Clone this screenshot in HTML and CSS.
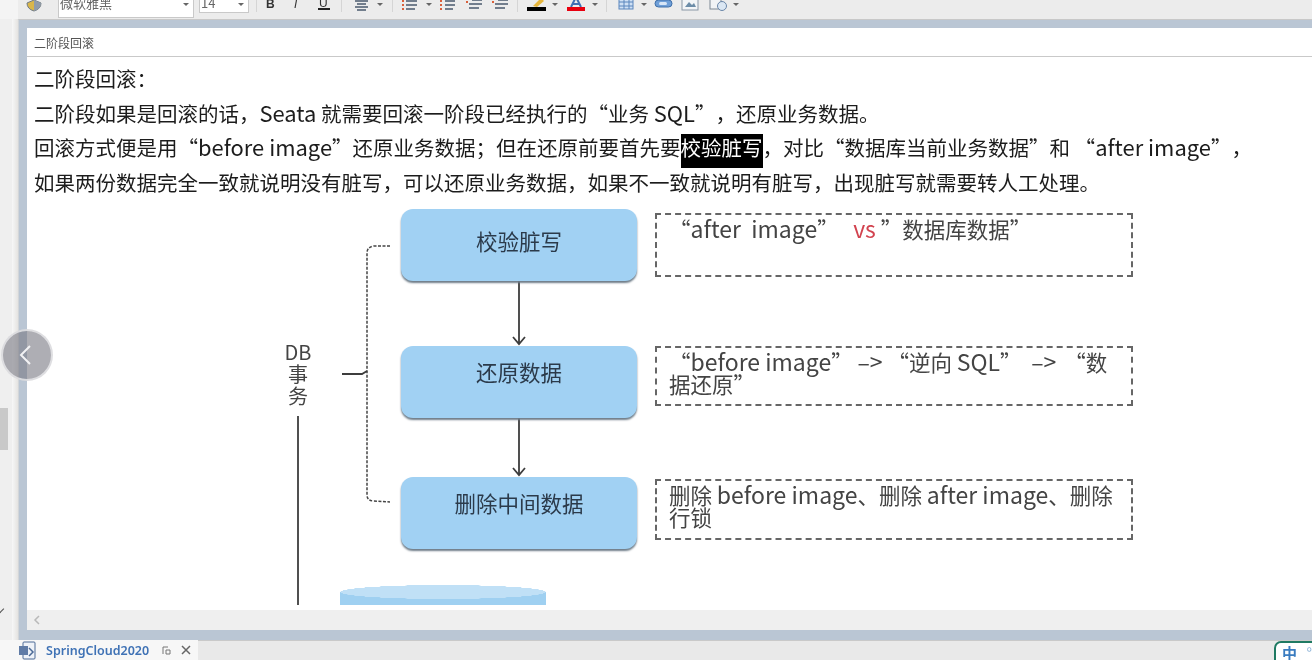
FILE: index.html
```html
<!DOCTYPE html>
<html lang="zh-CN">
<head>
    <meta charset="UTF-8">
    <title>SpringCloud2020 - 二阶段回滚</title>
    <link rel="stylesheet" href="styles.css">
</head>
<body>
    <div class="app">
        <!-- 工具栏 -->
        <div class="toolbar">
            <svg class="tool-shield" width="18" height="19" viewBox="0 0 18 19">
                <path d="M2 3 L9 0 L16 3 Q16 9 9 11 Q2 9 2 3 Z" fill="#d9b64a" stroke="#6f7a86"/>
                <path d="M9 0 L16 3 Q16 9 9 11 Z" fill="#8f9bab"/>
            </svg>
            <div class="combo combo-font"><span>微软雅黑</span><i class="caret"></i></div>
            <div class="combo combo-size"><span>14</span><i class="caret"></i></div>
            <svg class="tool-strip" width="500" height="19" viewBox="256 0 500 19">
                <text x="266" y="8" class="tool-letter bold">B</text>
                <text x="294" y="8" class="tool-letter ital">I</text>
                <text x="319" y="7" class="tool-letter">U</text>
                <rect x="318" y="8" width="12" height="2" fill="#222"/>
                <g fill="#666">
                    <path d="M377 3h6l-3 3z"/><path d="M426 3h6l-3 3z"/><path d="M552 3h6l-3 3z"/>
                    <path d="M592 3h6l-3 3z"/><path d="M641 3h6l-3 3z"/><path d="M733 3h6l-3 3z"/>
                </g>
                <g stroke="#d5d5d5">
                    <path d="M256.500 0v12M341.500 0v12M392.500 0v12M517.500 0v12M606.500 0v12"/>
                </g>
                <!-- 对齐、列表 -->
                <g stroke="#4a5a6e" stroke-width="1.400">
                    <path d="M355 1h13M357 4h9M355 7h13M357 10h9"/>
                    <path d="M406 1h11M406 5h11M406 9h9M445 1h10M445 5h10M445 9h8"/>
                    <path d="M472 0h10M469 4h13M469 8h10M498 0h10M495 4h13M495 8h10"/>
                </g>
                <g fill="#d9603c">
                    <rect x="402" y="0" width="2" height="2"/><rect x="402" y="4" width="2" height="2"/><rect x="402" y="8" width="2" height="2"/>
                    <rect x="440" y="0" width="2" height="2"/><rect x="440" y="4" width="2" height="2"/><rect x="440" y="8" width="2" height="2"/>
                    <rect x="466" y="1" width="2" height="2"/><rect x="492" y="1" width="2" height="2"/>
                </g>
                <!-- 高亮、字色 -->
                <path d="M533 6L541 -2L544 1L537 7Z" fill="#e6b63c"/>
                <rect x="527" y="7" width="19" height="4" fill="#000"/>
                <path d="M571 7L576 -3L581 7M573 4h6" fill="none" stroke="#3f6fb5" stroke-width="2"/>
                <rect x="567" y="7" width="18" height="4" fill="#e8000f"/>
                <!-- 表格、链接、图片、历史 -->
                <rect x="619" y="-2" width="14" height="11" fill="#cfe0f4" stroke="#5b86bd"/>
                <path d="M619 2h14M619 6h14M624 -2v11M629 -2v11" stroke="#5b86bd"/>
                <rect x="655" y="0" width="17" height="7" rx="3.500" fill="#6f9fd8" stroke="#3f6fa8"/>
                <rect x="659" y="2" width="8" height="3" rx="1.500" fill="#d7e6f7"/>
                <rect x="682" y="-2" width="16" height="12" fill="#f3f5f7" stroke="#8a97a6"/>
                <path d="M685 7L689 2L692 5L694 3L696 7Z" fill="#6d8da8"/>
                <rect x="710" y="-1" width="11" height="10" fill="#f1f3f5" stroke="#7d8894"/>
                <circle cx="722" cy="6" r="4.500" fill="#dbe7f3" stroke="#6a86a8"/>
            </svg>
        </div>

        <div class="workspace">
            <div class="side-rail"><span class="rail-thumb"></span><span class="rail-check"></span></div>
            <div class="frame">
                <div class="editor">
                    <div class="note-title">二阶段回滚</div>
                    <div class="note-body">
                        <p>二阶段回滚&#65306;</p>
                        <p>二阶段如果是回滚的话&#65292;<span class="lat">Seata</span> 就需要回滚一阶段已经执行的“业务 <span class="lat">SQL</span>”&#65292;还原业务数据。</p>
                        <p>回滚方式便是用“<span class="lat">before image</span>”还原业务数据&#65307;但在还原前要首先要<mark>校验脏写</mark>&#65292;对比“数据库当前业务数据”和 “<span class="lat">after image</span>”&#65292;</p>
                        <p>如果两份数据完全一致就说明没有脏写&#65292;可以还原业务数据&#65292;如果不一致就说明有脏写&#65292;出现脏写就需要转人工处理。</p>

                        <!-- 流程图 -->
                        <div class="diagram">
                            <svg class="wires" width="1285" height="400" viewBox="27 205 1285 400">
                                <path d="M390 246 L374 246 Q367 247 367 253 L367 495 Q367 501 374 501 L390 502" class="wire-dash"/>
                                <path d="M342 374 H362 L367 371" class="wire"/>
                                <path d="M298 416 V605" class="wire"/>
                                <path d="M519 281 V344 M513 337 L519 344 L525 337" class="wire"/>
                                <path d="M519 418 V475 M513 468 L519 475 L525 468" class="wire"/>
                            </svg>
                            <div class="db-label">DB<br>事<br>务</div>
                            <div class="step step-1">校验脏写</div>
                            <div class="step step-2">还原数据</div>
                            <div class="step step-3">删除中间数据</div>
                            <div class="memo memo-1">“<span class="lat">after&nbsp; image</span>”&nbsp;&nbsp; <span class="lat vs">vs</span> ”数据库数据”</div>
                            <div class="memo memo-2">“<span class="lat">before image</span>” <span class="lat">–&gt;</span> “逆向 <span class="lat">SQL</span>” <span class="lat arrow-2">–&gt;</span> “数据还原”</div>
                            <div class="memo memo-3">删除 <span class="lat">before image</span>、删除 <span class="lat">after image</span>、删除行锁</div>
                            <div class="cylinder"></div>
                        </div>
                    </div>
                    <div class="hscroll"><svg width="8" height="10" viewBox="0 0 8 10"><path d="M6 1L2 5L6 9" fill="none" stroke="#b9b9b9" stroke-width="1.500"/></svg></div>
                </div>
            </div>
        </div>

        <!-- 底部标签 -->
        <div class="tabbar">
            <div class="tab">
                <svg class="tab-icon" width="18" height="19" viewBox="0 0 18 19">
                    <rect x="5" y="1" width="12" height="17" rx="1" fill="#eef2f8" stroke="#4c6a96"/>
                    <rect x="1" y="5" width="9" height="9" fill="#5f7ba6"/>
                    <path d="M11 7L15 11L11 15" fill="none" stroke="#4c6a96" stroke-width="1.500"/>
                </svg>
                <span class="tab-name">SpringCloud2020</span>
                <svg class="tab-btn" width="9" height="9" viewBox="0 0 9 9"><path d="M1 8V1h5M4 4h4v4h-4z" fill="none" stroke="#777"/></svg>
                <svg class="tab-btn" width="10" height="10" viewBox="0 0 10 10"><path d="M1 1L9 9M9 1L1 9" stroke="#666" stroke-width="1.500"/></svg>
            </div>
            <div class="ime"><span>中</span><span class="ime-mark">°</span></div>
        </div>

        <button class="nav-round" aria-label="上一页">
            <svg width="13" height="22" viewBox="0 0 13 22"><path d="M11 2L2 11L11 20" fill="none" stroke="#f2f2f4" stroke-width="2"/></svg>
        </button>
    </div>
</body>
</html>
```
FILE: styles.css
```css
* {
    box-sizing: border-box;
}

html, body {
    margin: 0;
    padding: 0;
    height: 100%;
    overflow: hidden;
}

body {
    font-family: "Noto Sans CJK SC", "Noto Sans", sans-serif;
    background-color: #ededed;
    color: #222;
    text-spacing-trim: space-all;
}

.app {
    position: relative;
    display: flex;
    flex-direction: column;
    width: 1312px;
    height: 660px;
    overflow: hidden;
    filter: blur(0.35px);
}

/* toolbar */
.toolbar {
    display: flex;
    align-items: flex-start;
    flex: 0 0 19px;
    height: 19px;
    padding-left: 7px;
    background-color: #ececec;
    overflow: hidden;
    border-left: 18px solid #f4f4f4;
}

.tool-shield {
    margin-right: 15px;
}

.combo {
    display: flex;
    align-items: flex-start;
    justify-content: space-between;
    height: 18px;
    padding: 0 4px 0 1px;
    margin-right: 5px;
    background-color: #fff;
    border: 1px solid #c9c9c9;
    border-top: none;
    font-size: 13px;
    line-height: 12px;
    color: #666;
}

.combo span {
    margin-top: -3px;
}

.combo-font {
    width: 136px;
}

.combo-size {
    width: 50px;
    height: 13px;
    margin-right: 7px;
}

.caret {
    width: 0;
    height: 0;
    margin-top: 3px;
    border-left: 3px solid transparent;
    border-right: 3px solid transparent;
    border-top: 3px solid #666;
}

.tool-letter {
    font-family: "Liberation Sans", sans-serif;
    font-size: 12px;
    fill: #333;
}

.tool-letter.bold {
    font-weight: bold;
}

.tool-letter.ital {
    font-style: italic;
}

/* main area */
.workspace {
    display: flex;
    flex: 1;
    min-height: 0;
}

.side-rail {
    position: relative;
    flex: 0 0 18px;
    background: linear-gradient(to right, #efefef 0, #efefef 12px, #f7f7f7 12px, #e4e3e1 18px);
}

.rail-thumb {
    position: absolute;
    left: 0;
    top: 389px;
    width: 8px;
    height: 42px;
    background-color: #c9c9c9;
}

.rail-check {
    position: absolute;
    left: -3px;
    top: 587px;
    width: 6px;
    height: 6px;
    border-right: 1px solid #555;
    border-bottom: 1px solid #555;
    transform: rotate(45deg);
}

.frame {
    flex: 1;
    min-width: 0;
    padding: 8px 0 10px 8px;
    background-color: #bac6d4;
    border-top: 1px solid #c8c8c8;
    border-left: 1px solid #d2d5d8;
}

.editor {
    display: flex;
    flex-direction: column;
    height: 100%;
    background-color: #fff;
}

.note-title {
    flex: 0 0 29px;
    padding: 5px 0 0 7px;
    border-bottom: 1px solid #c9c9c9;
    font-size: 12px;
    line-height: 20px;
    color: #555;
}

.note-body {
    position: relative;
    flex: 1;
    min-height: 0;
    padding: 4px 0 0 7px;
    overflow: hidden;
    font-size: 20.500px;
    color: #1c1c1c;
}

.note-body p {
    margin: 0;
    height: 34.500px;
    line-height: 34.500px;
    white-space: nowrap;
}

.note-body mark {
    padding-bottom: 6px;
    background: linear-gradient(to bottom, transparent 2px, #000 2px);
    color: #fff;
}

.hscroll {
    display: flex;
    align-items: center;
    flex: 0 0 20px;
    padding-left: 6px;
    background-color: #efefef;
}

/* latin words run a bit larger than the hanzi around them */
.lat {
    font-size: 1.07em;
    line-height: 0;
}

/* diagram, free canvas */
.diagram {
    position: absolute;
    left: 0;
    top: 148px;
    width: 1285px;
    height: 400px;
}

.wires {
    position: absolute;
    left: 0;
    top: 0;
}

.wire {
    fill: none;
    stroke: #3d3d3d;
    stroke-width: 1.800;
}

.wire-dash {
    fill: none;
    stroke: #444;
    stroke-width: 1.500;
    stroke-dasharray: 3 1.500;
}

.db-label {
    position: absolute;
    left: 246px;
    top: 136px;
    width: 50px;
    font-size: 20px;
    line-height: 22px;
    text-align: center;
    color: #444;
}

.step {
    position: absolute;
    left: 374px;
    width: 236px;
    height: 72px;
    padding-top: 19px;
    background-color: #a1d1f3;
    border-radius: 12px;
    box-shadow: 0 2px 2px #6e7c88;
    font-size: 21.500px;
    line-height: 26px;
    text-align: center;
    color: #2b3a4a;
}

.step-1 {
    top: 4px;
}

.step-2 {
    top: 141px;
    padding-top: 13px;
}

.step-3 {
    top: 272px;
    padding-top: 13px;
}

.memo {
    position: absolute;
    left: 628px;
    width: 478px;
    padding: 3px 12px;
    border: 2px dashed #666;
    font-size: 21.500px;
    line-height: 22px;
    color: #444;
}

.arrow-2 {
    margin-left: 5px;
    margin-right: 3px;
}

.memo-1 {
    top: 8px;
    height: 64px;
}

.memo-2 {
    top: 141px;
    height: 60px;
}

.memo-3 {
    top: 274px;
    height: 61px;
}

.vs {
    color: #d2434f;
}

.cylinder {
    position: absolute;
    left: 313px;
    top: 380px;
    width: 206px;
    height: 20px;
    background: radial-gradient(ellipse 103px 7px at 50% 7px, #c0e0f6 99%, transparent 100%), linear-gradient(to bottom, transparent 7px, #9fd0f1 7px);
}

/* bottom tabs */
.tabbar {
    display: flex;
    align-items: flex-end;
    justify-content: space-between;
    flex: 0 0 20px;
    background-color: #e9e9e9;
    border-top: 1px solid #c9c9c9;
}

.tab {
    display: flex;
    align-items: center;
    width: 198px;
    height: 20px;
    margin-top: -1px;
    padding-left: 18px;
    background-color: #f7f7f7;
}

.tab-icon {
    flex: none;
}

.tab-name {
    margin-left: 10px;
    margin-right: 13px;
    font-family: "Noto Sans", sans-serif;
    font-size: 12.500px;
    font-weight: 600;
    color: #3f72b5;
}

.tab-btn {
    flex: none;
    margin-right: 10px;
}

.tab-btn:last-child {
    margin-right: 0;
}

.ime {
    display: flex;
    justify-content: space-between;
    width: 40px;
    height: 19px;
    margin-right: -2px;
    padding: 0 0 0 6px;
    background-color: #fff;
    border: 2px solid #1f7a62;
    border-bottom: none;
    border-radius: 7px 0 0 0;
    font-size: 15px;
    line-height: 19px;
    font-weight: 700;
    color: #3a7cc0;
}

.ime-mark {
    color: #8fb5d8;
    font-weight: 400;
}

/* round prev button over the page */
.nav-round {
    position: absolute;
    left: 1px;
    top: 329px;
    display: flex;
    align-items: center;
    justify-content: center;
    width: 52px;
    height: 52px;
    padding: 0 4px 0 0;
    background-color: rgba(120, 120, 130, 0.6);
    border: 2px solid rgba(235, 235, 238, 0.8);
    border-radius: 50%;
}
```
